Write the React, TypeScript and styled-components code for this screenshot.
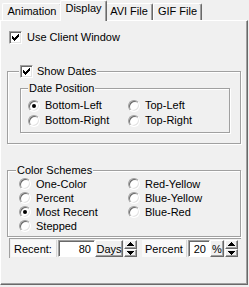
import styled, { createGlobalStyle } from "styled-components";

const GlobalStyle = createGlobalStyle`
  html, body {
    margin: 0;
    padding: 0;
    background: #f0f0f0;
  }
  body {
    font-family: "Liberation Sans", Arial, sans-serif;
    font-size: 11px;
    color: #000;
  }
  * {
    box-sizing: border-box;
  }
`;

// whole dialog page
const Window = styled.div`
  width: 249px;
  height: 287px;
  display: flex;
  flex-direction: column;
  background: #f0f0f0;
  overflow: hidden;
`;

// tab row
const TabStrip = styled.div`
  display: flex;
  align-items: flex-end;
  height: 20px;
  padding-left: 2px;
  position: relative;
  z-index: 1;
`;

const Tab = styled.div<{ $active?: boolean; $w: number }>`
  width: ${(p) => p.$w}px;
  height: ${(p) => (p.$active ? 21 : 17)}px;
  margin: 0 ${(p) => (p.$active ? -2 : 0)}px ${(p) => (p.$active ? -1 : 0)}px;
  padding-top: 1px;
  line-height: 13px;
  text-align: center;
  white-space: nowrap;
  background: #f0f0f0;
  border-top: 1px solid #fff;
  border-left: 1px solid #fff;
  border-right: 1px solid #696969;
  border-radius: 2px 2px 0 0;
  box-shadow: inset -1px 0 0 #a0a0a0;
  position: relative;
  z-index: ${(p) => (p.$active ? 2 : 1)};
`;

// page under the tabs
const Panel = styled.div`
  width: 248px;
  height: 265px;
  border-top: 1px solid #fff;
  border-left: 1px solid #fff;
  border-right: 1px solid #696969;
  border-bottom: 1px solid #696969;
  box-shadow: inset -1px -1px 0 #a0a0a0;
  padding: 10px 0 0 6px;
`;

const CheckRow = styled.label`
  display: flex;
  align-items: center;
  gap: 5px;
  height: 13px;
  line-height: 13px;
  margin-left: 2px;
`;

const CheckBox = styled.span`
  width: 13px;
  height: 13px;
  flex: none;
  background: #fff;
  border: 1px solid;
  border-color: #a0a0a0 #fff #fff #a0a0a0;
  box-shadow: inset 1px 1px 0 #696969, inset -1px -1px 0 #e3e3e3;
  display: flex;
  align-items: center;
  justify-content: center;
`;

const GroupBox = styled.div<{ $w: number; $h: number; $mt: number }>`
  position: relative;
  width: ${(p) => p.$w}px;
  height: ${(p) => p.$h}px;
  margin-top: ${(p) => p.$mt}px;
  border: 1px solid #a0a0a0;
  box-shadow: inset 1px 1px 0 #fff, 1px 1px 0 #fff;
`;

const Legend = styled.div<{ $left: number }>`
  position: absolute;
  top: -7px;
  left: ${(p) => p.$left}px;
  display: flex;
  align-items: center;
  gap: 4px;
  height: 13px;
  line-height: 13px;
  padding: 0 1px;
  background: #f0f0f0;
  white-space: nowrap;
`;

const GroupBody = styled.div<{ $pt: number; $pl: number }>`
  padding: ${(p) => p.$pt}px 0 0 ${(p) => p.$pl}px;
`;

const RadioGrid = styled.div<{ $col: number; $row: number }>`
  display: grid;
  grid-template-columns: ${(p) => p.$col}px 1fr;
  grid-auto-rows: ${(p) => p.$row}px;
`;

const RadioItem = styled.label`
  display: flex;
  align-items: center;
  gap: 5px;
  line-height: 13px;
  white-space: nowrap;
`;

const RadioDot = styled.span<{ $on?: boolean }>`
  width: 12px;
  height: 12px;
  flex: none;
  border-radius: 50%;
  background: #fff;
  border: 1px solid;
  border-color: #a0a0a0 #fff #fff #a0a0a0;
  box-shadow: inset 1px 1px 0 #696969, inset -1px -1px 0 #e3e3e3;
  display: flex;
  align-items: center;
  justify-content: center;

  &::after {
    content: "";
    display: ${(p) => (p.$on ? "block" : "none")};
    width: 4px;
    height: 4px;
    border-radius: 50%;
    background: #000;
  }
`;

// bottom strip with the two spin fields
const FieldBar = styled.div`
  display: flex;
  align-items: stretch;
  width: 232px;
  height: 20px;
  margin: 1px 0 0 2px;
  padding: 1px 0 1px 1px;
  border-top: 1px solid #a0a0a0;
  border-left: 1px solid #a0a0a0;
  background: #f0f0f0;
`;

const FieldLabel = styled.div<{ $w: number; $ml?: number }>`
  width: ${(p) => p.$w}px;
  margin-left: ${(p) => p.$ml ?? 0}px;
  padding-left: 3px;
  display: flex;
  align-items: center;
  background: #f9f9f9;
  border-right: 1px solid #d8d8d8;
`;

const FieldInput = styled.div<{ $w: number }>`
  width: ${(p) => p.$w}px;
  margin-left: 1px;
  padding-right: 3px;
  display: flex;
  align-items: center;
  justify-content: flex-end;
  background: #fff;
  border: 1px solid;
  border-color: #a0a0a0 #fff #fff #a0a0a0;
  box-shadow: inset 1px 1px 0 #696969;
`;

const UnitButton = styled.div<{ $w: number }>`
  width: ${(p) => p.$w}px;
  display: flex;
  align-items: center;
  justify-content: center;
  background: #f0f0f0;
  border: 1px solid;
  border-color: #fff #696969 #696969 #fff;
  box-shadow: inset -1px -1px 0 #a0a0a0;
`;

const Spinner = styled.div`
  width: 13px;
  margin-left: 1px;
  display: flex;
  flex-direction: column;
`;

const SpinHalf = styled.div`
  flex: 1;
  display: flex;
  align-items: center;
  justify-content: center;
  background: #f0f0f0;
  border: 1px solid;
  border-color: #fff #696969 #696969 #fff;
  box-shadow: inset -1px -1px 0 #a0a0a0;
`;

const Check = () => (
  <svg width="7" height="7" viewBox="0 0 7 7">
    <path d="M0 2h1v1h1v1h1V3h1V2h1V1h1V0h1v3H6v1H5v1H4v1H3v1H2V6H1V5H0z" fill="#000" />
  </svg>
);

const Arrow = ({ up }: { up?: boolean }) => (
  <svg width="7" height="4" viewBox="0 0 7 4">
    <path d={up ? "M3 0h1v1h1v1h1v1h1v1H0V3h1V2h1V1h1z" : "M0 0h7v1H6v1H5v1H4v1H3V3H2V2H1V1H0z"} fill="#000" />
  </svg>
);

const SpinBox = () => (
  <Spinner>
    <SpinHalf>
      <Arrow up />
    </SpinHalf>
    <SpinHalf>
      <Arrow />
    </SpinHalf>
  </Spinner>
);

const Radio = ({ label, on }: { label: string; on?: boolean }) => (
  <RadioItem>
    <RadioDot $on={on} />
    {label}
  </RadioItem>
);

export default function App() {
  return (
    <Window>
      <GlobalStyle />
      <TabStrip>
        <Tab $w={60}>Animation</Tab>
        <Tab $w={47} $active>
          Display
        </Tab>
        <Tab $w={48}>AVI File</Tab>
        <Tab $w={49}>GIF File</Tab>
      </TabStrip>

      <Panel>
        <CheckRow>
          <CheckBox>
            <Check />
          </CheckBox>
          Use Client Window
        </CheckRow>

        <GroupBox $w={234} $h={73} $mt={27}>
          <Legend $left={11}>
            <CheckBox>
              <Check />
            </CheckBox>
            Show Dates
          </Legend>
          <GroupBody $pt={16} $pl={12}>
            <GroupBox $w={210} $h={45} $mt={0}>
              <Legend $left={7}>Date Position</Legend>
              <GroupBody $pt={9} $pl={7}>
                <RadioGrid $col={100} $row={15}>
                  <Radio label="Bottom-Left" on />
                  <Radio label="Top-Left" />
                  <Radio label="Bottom-Right" />
                  <Radio label="Top-Right" />
                </RadioGrid>
              </GroupBody>
            </GroupBox>
          </GroupBody>
        </GroupBox>

        <GroupBox $w={234} $h={67} $mt={26}>
          <Legend $left={8}>Color Schemes</Legend>
          <GroupBody $pt={6} $pl={11}>
            <RadioGrid $col={109} $row={14}>
              <Radio label="One-Color" />
              <Radio label="Red-Yellow" />
              <Radio label="Percent" />
              <Radio label="Blue-Yellow" />
              <Radio label="Most Recent" on />
              <Radio label="Blue-Red" />
              <Radio label="Stepped" />
            </RadioGrid>
          </GroupBody>
        </GroupBox>

        <FieldBar>
          <FieldLabel $w={46}>Recent:</FieldLabel>
          <FieldInput $w={37}>80</FieldInput>
          <UnitButton $w={28}>Days</UnitButton>
          <SpinBox />
          <FieldLabel $w={45} $ml={5}>
            Percent
          </FieldLabel>
          <FieldInput $w={22}>20</FieldInput>
          <UnitButton $w={14}>%</UnitButton>
          <SpinBox />
        </FieldBar>
      </Panel>
    </Window>
  );
}
